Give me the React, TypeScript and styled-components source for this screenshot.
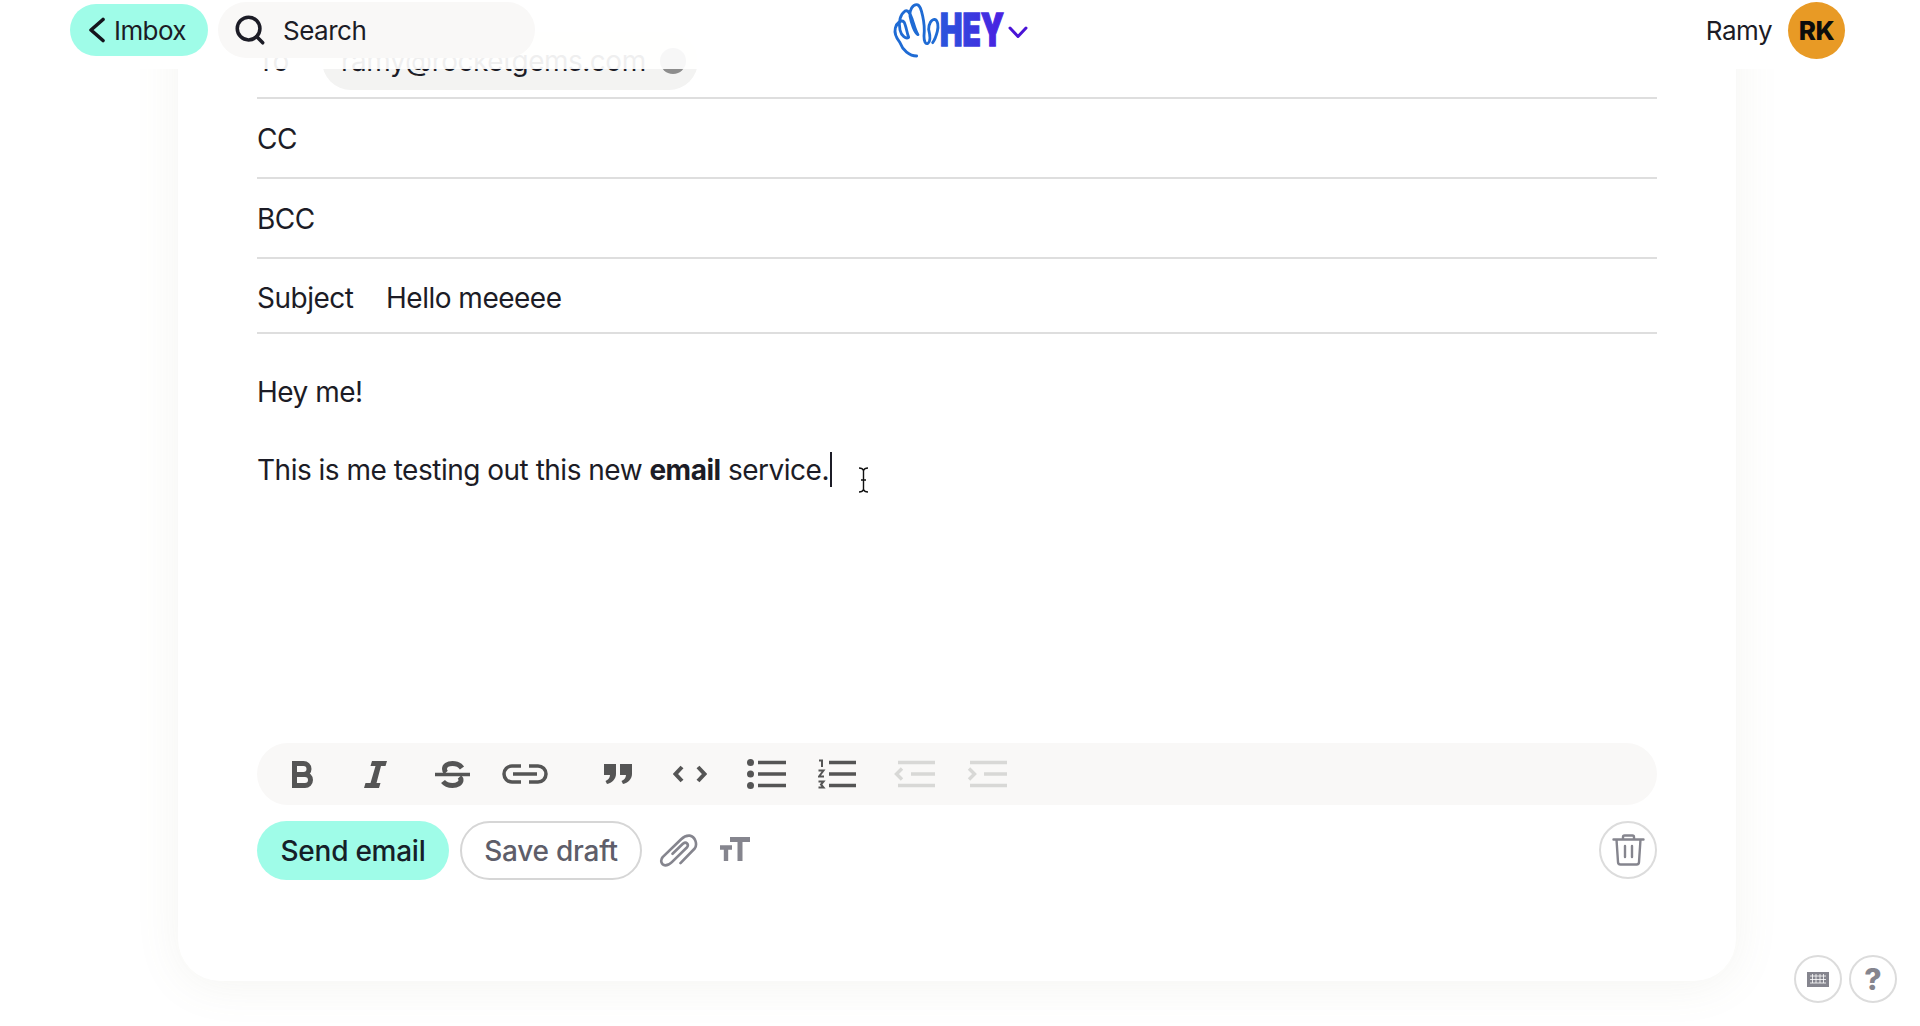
import React from "react";
import styled, { createGlobalStyle } from "styled-components";
import { Search as SearchIcon } from "lucide-react";

const Global = createGlobalStyle`
  html, body { margin: 0; padding: 0; height: 100%; background: #fff; overflow: hidden; }
  body { font-family: Inter, "Liberation Sans", sans-serif; color: #1c1c26; }
`;

const Page = styled.div`
  position: relative;
  width: 1920px;
  height: 1026px;
  overflow: hidden;
  background: #fff;
`;

const Header = styled.header`
  position: absolute;
  inset: 0 0 auto 0;
  z-index: 2;
  height: 69px;
  box-sizing: border-box;
  padding: 0 75px 9px 70px;
  display: grid;
  grid-template-columns: 1fr auto 1fr;
  align-items: center;
  background: rgba(255, 255, 255, 0.93);
`;

const HeaderLeft = styled.div`
  display: flex;
  align-items: center;
  gap: 10px;
`;

const HeaderRight = styled.div`
  display: flex;
  align-items: center;
  justify-content: flex-end;
  gap: 16px;
  font-size: 26px;
  letter-spacing: -0.5px;
`;

const BackPill = styled.div`
  display: flex;
  align-items: center;
  gap: 8px;
  height: 52px;
  width: 138px;
  box-sizing: border-box;
  padding-left: 18px;
  border-radius: 26px;
  background: #9ffce8;
  font-size: 26px;
  letter-spacing: -0.6px;
`;

const SearchPill = styled.div`
  display: flex;
  align-items: center;
  gap: 16px;
  width: 317px;
  height: 56px;
  box-sizing: border-box;
  padding-left: 15px;
  border-radius: 28px;
  background: #f9f8f7;
  font-size: 26px;
  letter-spacing: -0.5px;
`;

const Avatar = styled.div`
  width: 57px;
  height: 57px;
  border-radius: 50%;
  background: #e89a25;
  color: #0c0c0c;
  display: flex;
  align-items: center;
  justify-content: center;
  font-size: 26px;
  font-weight: 800;
  letter-spacing: -0.5px;
`;

const LogoSvg = styled.svg`
  display: block;
  width: 134px;
  height: 60px;
  margin-left: 4px;
  overflow: visible;
`;

const LogoWord = styled.text`
  font-family: Inter, sans-serif;
  font-weight: 900;
  font-size: 45px;
`;

const Card = styled.main`
  box-sizing: border-box;
  width: 1558px;
  height: 1041px;
  margin: -60px 0 0 178px;
  padding: 85px 79px 101px;
  display: flex;
  flex-direction: column;
  background: #fff;
  border-radius: 0 0 42px 42px;
  box-shadow: 0 4px 46px rgba(130, 130, 95, 0.09);
  font-size: 28px;
  letter-spacing: -0.5px;
`;

const Row = styled.div<{ $h: number; $pt?: number }>`
  box-sizing: border-box;
  height: ${(p) => p.$h}px;
  padding-top: ${(p) => p.$pt ?? 0}px;
  display: flex;
  align-items: center;
  border-bottom: 2px solid #dedede;
  flex: none;
`;

const Label = styled.span<{ $w?: number }>`
  width: ${(p) => (p.$w ? `${p.$w}px` : "auto")};
  flex: none;
`;

const Chip = styled.div`
  box-sizing: border-box;
  width: 376px;
  height: 58px;
  padding: 0 12px 0 19px;
  display: flex;
  align-items: center;
  justify-content: space-between;
  border-radius: 29px;
  background: #f3f3f2;
`;

const ChipClose = styled.span`
  width: 26px;
  height: 26px;
  border-radius: 50%;
  background: #8d8d8d;
`;

const Body = styled.div`
  flex: 1;
  padding-top: 39px;
  line-height: 39px;
`;

const Para = styled.p<{ $mt?: number }>`
  margin: ${(p) => p.$mt ?? 0}px 0 0;
`;

const Caret = styled.span`
  display: inline-block;
  width: 2px;
  height: 35px;
  margin-left: 1px;
  background: #1c1c26;
  vertical-align: -7px;
`;

const IBeam = styled.svg`
  position: absolute;
  left: 857px;
  top: 467px;
  z-index: 1;
`;

const Toolbar = styled.div`
  height: 62px;
  box-sizing: border-box;
  padding-left: 35px;
  display: flex;
  align-items: center;
  border-radius: 31px;
  background: #f9f8f7;
  flex: none;
`;

const ToolIcon = styled.svg<{ $ml?: number; $off?: boolean }>`
  display: block;
  flex: none;
  margin-left: ${(p) => p.$ml ?? 0}px;
  color: ${(p) => (p.$off ? "#d8d8d6" : "#555555")};
`;

const Actions = styled.div`
  margin-top: 16px;
  display: flex;
  align-items: center;
  flex: none;
`;

const SendButton = styled.button`
  width: 192px;
  height: 59px;
  border: 0;
  border-radius: 30px;
  background: #9ffce8;
  color: #152028;
  font: 500 28px Inter, sans-serif;
  letter-spacing: -0.25px;
  padding: 0;
`;

const DraftButton = styled.button`
  width: 182px;
  height: 59px;
  margin-left: 11px;
  border: 2px solid #d6d6d6;
  border-radius: 30px;
  background: #fff;
  color: #5e5e6a;
  font: 500 28px Inter, sans-serif;
  letter-spacing: -0.25px;
  padding: 0;
`;

const ClipIcon = styled.svg`
  margin-left: 17px;
  color: #85858e;
  flex: none;
`;

const SizeIcon = styled.svg`
  margin: 0 0 4px 22px;
  color: #85858e;
  flex: none;
`;

const Spacer = styled.div`
  flex: 1;
`;

const RoundButton = styled.div<{ $size: number }>`
  box-sizing: border-box;
  width: ${(p) => p.$size}px;
  height: ${(p) => p.$size}px;
  align-self: flex-start;
  border: 2px solid #dcdcdc;
  border-radius: 50%;
  background: #fff;
  display: flex;
  align-items: center;
  justify-content: center;
  color: #85858e;
  flex: none;
`;

const HelpGlyph = styled.span`
  font-size: 30px;
  font-weight: 800;
  line-height: 1;
`;

const CornerTools = styled.div`
  position: absolute;
  right: 23px;
  bottom: 23px;
  display: flex;
  gap: 7px;
`;

const handPath =
  "M92 168 C70 168 50 150 42 128 C34 118 24 100 28 84 C32 68 46 58 54 66 C60 76 62 96 68 112 C60 118 46 108 42 90 C36 66 44 42 56 34 C66 28 72 40 78 56 C84 74 88 92 96 104 C86 100 76 70 72 48 C70 30 80 14 92 14 C102 14 106 30 110 48 C114 66 116 90 114 108 C114 124 118 134 126 130 C134 124 132 104 128 88 C128 72 136 58 146 58 C156 60 158 80 154 94 C150 110 146 120 140 128";

export default function App() {
  return (
    <Page>
      <Global />
      <Header>
        <HeaderLeft>
          <BackPill>
            <svg width="18" height="26" viewBox="0 0 18 26" fill="none" stroke="#14141c" strokeWidth="3.6" strokeLinecap="round" strokeLinejoin="round">
              <polyline points="15,2.5 3,13 15,23.5" />
            </svg>
            Imbox
          </BackPill>
          <SearchPill>
            <SearchIcon size={34} strokeWidth={2.5} color="#1c1c26" />
            Search
          </SearchPill>
        </HeaderLeft>
        <LogoSvg viewBox="0 0 134 60">
          <defs>
            <linearGradient id="heyGrad" x1="0" x2="1" y1="0" y2="0">
              <stop offset="0" stopColor="#2a55dc" />
              <stop offset="1" stopColor="#4a1fe2" />
            </linearGradient>
          </defs>
          <g transform="translate(-7 0) scale(0.3333)" fill="none" stroke="#1f6bd4" strokeWidth="8.5" strokeLinecap="round" strokeLinejoin="round">
            <path d={handPath} />
          </g>
          <LogoWord x="47" y="46" textLength="64" lengthAdjust="spacingAndGlyphs" fill="url(#heyGrad)" stroke="url(#heyGrad)" strokeWidth="1.4">HEY</LogoWord>
          <polyline points="117,28 125,36.5 133,28" fill="none" stroke="#4a14d6" strokeWidth="3" strokeLinecap="round" strokeLinejoin="round" />
        </LogoSvg>
        <HeaderRight>
          Ramy
          <Avatar>RK</Avatar>
        </HeaderRight>
      </Header>

      <Card>
        <Row $h={74}>
          <Label $w={65}>To</Label>
          <Chip>
            ramy@rocketgems.com
            <ChipClose />
          </Chip>
        </Row>
        <Row $h={80} $pt={2}><Label>CC</Label></Row>
        <Row $h={80} $pt={1}><Label>BCC</Label></Row>
        <Row $h={75} $pt={5}>
          <Label $w={129}>Subject</Label>
          Hello meeeee
        </Row>
        <Body>
          <Para>Hey me!</Para>
          <Para $mt={39}>
            This is me testing out this new <b>email</b> service.<Caret />
          </Para>
        </Body>

        <Toolbar>
          <ToolIcon width="21" height="27" viewBox="0 0 21 27" fill="none" stroke="currentColor" strokeWidth="5">
            <path d="M2.5 2.5h9a5 5 0 0 1 0 11h-9zM2.5 13.5h10.5a5.5 5.5 0 0 1 0 11H2.5z" />
          </ToolIcon>
          <ToolIcon $ml={51} width="23" height="27" viewBox="0 0 23 27" fill="currentColor">
            <path d="M8 0h15l-1.5 5h-4.5L12.5 22h4L15 27H0l1.5-5h5L11.5 5H6.5z" />
          </ToolIcon>
          <ToolIcon $ml={48} width="35" height="27" viewBox="0 0 35 27" fill="none" stroke="currentColor" strokeWidth="5">
            <path d="M27 7C25 4 21 2.5 17.5 2.5 12.5 2.5 9.5 5 9.5 8c0 1.5.5 2.5 1.5 3.5M24.5 16c1 1 1.5 2 1.5 3 0 3-3.5 5.5-8.5 5.5-4 0-7.5-1.5-9.5-4" />
            <path d="M0 13.5h35" strokeWidth="3.5" />
          </ToolIcon>
          <ToolIcon $ml={32} width="46" height="20" viewBox="0 0 46 20" fill="none" stroke="currentColor" strokeWidth="3.5">
            <path d="M19 2H10a8 8 0 0 0 0 16h9M27 2h9a8 8 0 0 1 0 16h-9M11 10h24" />
          </ToolIcon>
          <ToolIcon $ml={56} width="28" height="20" viewBox="0 0 28 20" fill="currentColor">
            <path d="M0 0h12v10c0 5-4 9-9 10l-1.5-3C4 16 6 14 6 11H0zM16 0h12v10c0 5-4 9-9 10l-1.5-3c2.5-1 4.5-3 4.5-6h-6z" />
          </ToolIcon>
          <ToolIcon $ml={41} width="34" height="18" viewBox="0 0 34 18" fill="none" stroke="currentColor" strokeWidth="4">
            <path d="M9 2 2.5 9 9 16M25 2l6.5 7L25 16" />
          </ToolIcon>
          <ToolIcon $ml={40} width="39" height="30" viewBox="0 0 39 30" fill="currentColor">
            <circle cx="3.5" cy="3.5" r="3.5" />
            <circle cx="3.5" cy="15" r="3.5" />
            <circle cx="3.5" cy="26.5" r="3.5" />
            <path d="M11 1.7h28v3.6H11zM11 13.2h28v3.6H11zM11 24.7h28v3.6H11z" />
          </ToolIcon>
          <ToolIcon $ml={32} width="38" height="30" viewBox="0 0 38 30" fill="none" stroke="currentColor">
            <path d="M11 3.5h27M11 15h27M11 26.5h27" strokeWidth="3.6" />
            <path d="M1 1.5h3v6.5M.5 11.5h5l-4.5 6h5M.5 22.5h5l-2.5 3 2.5 3h-5" strokeWidth="2" />
          </ToolIcon>
          <ToolIcon $off $ml={38} width="41" height="30" viewBox="0 0 41 30" fill="none" stroke="currentColor" strokeWidth="3.6">
            <path d="M4 3.5h37M17 15h24M4 26.5h37" />
            <path d="M8 9.5 2.5 15 8 20.5" strokeWidth="3.4" />
          </ToolIcon>
          <ToolIcon $off $ml={32} width="40" height="30" viewBox="0 0 40 30" fill="none" stroke="currentColor" strokeWidth="3.6">
            <path d="M3 3.5h37M17 15h23M3 26.5h37" />
            <path d="M2 9.5 7.5 15 2 20.5" strokeWidth="3.4" />
          </ToolIcon>
        </Toolbar>

        <Actions>
          <SendButton>Send email</SendButton>
          <DraftButton>Save draft</DraftButton>
          <ClipIcon width="39" height="35" viewBox="55 312 118 104" fill="none" stroke="currentColor" strokeWidth="8" strokeLinecap="round" strokeLinejoin="round">
            <path d="M120 402 L163 358 C172 345 165 322 148 319 C138 318 130 322 122 330 L66 384 C58 394 62 408 74 409 C82 409 88 405 94 399 L140 354 C146 346 138 336 128 343 L96 374" />
          </ClipIcon>
          <SizeIcon width="30" height="24" viewBox="0 0 30 24" fill="none" stroke="currentColor">
            <path d="M10 2.5h20M20 2.5V24" strokeWidth="5" />
            <path d="M0 10.5h12M6 10.5V24" strokeWidth="4.4" />
          </SizeIcon>
          <Spacer />
          <RoundButton $size={58}>
            <svg width="33" height="32" viewBox="0 0 33 32" fill="none" stroke="currentColor" strokeWidth="2.4" strokeLinecap="round" strokeLinejoin="round">
              <path d="M1.5 5.5h30M11 5V3a1.5 1.5 0 0 1 1.5-1.5h8A1.5 1.5 0 0 1 22 3v2M4.5 5.5 6 28a2.5 2.5 0 0 0 2.5 2.5h16A2.5 2.5 0 0 0 27 28l1.5-22.5M13 12v11M20 12v11" />
            </svg>
          </RoundButton>
        </Actions>
      </Card>

      <IBeam width="13" height="26" viewBox="0 0 13 26" fill="none" stroke="#111" strokeWidth="1.4">
        <path d="M2 1c2 0 4 1 4.5 2.5C7 2 9 1 11 1M6.5 3.5v19M2 25c2 0 4-1 4.5-2.5C7 24 9 25 11 25M4 13h5" />
      </IBeam>

      <CornerTools>
        <RoundButton $size={48}>
          <svg width="22" height="15" viewBox="0 0 22 15" fill="#85858e">
            <path d="M0 0h22v15H0z" />
            <path d="M3 4h16M3 7.5h16M3 11h16M5.5 2v9M9 2v9M13 2v9M16.5 2v9" stroke="#fff" strokeWidth=".8" fill="none" />
          </svg>
        </RoundButton>
        <RoundButton $size={48}>
          <HelpGlyph>?</HelpGlyph>
        </RoundButton>
      </CornerTools>
    </Page>
  );
}
